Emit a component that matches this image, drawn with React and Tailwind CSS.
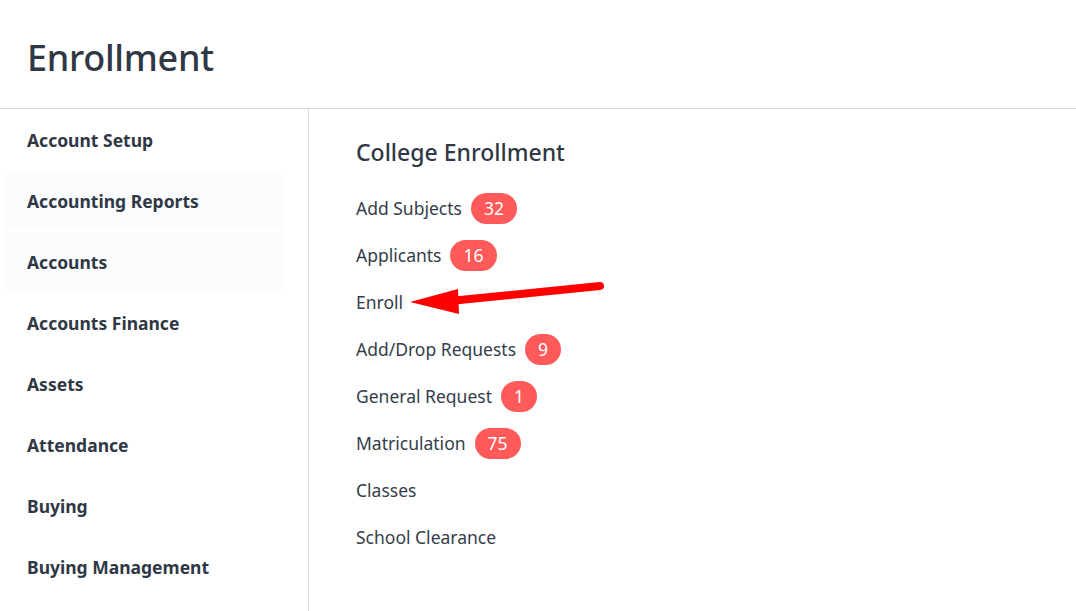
import React from 'react';

const sideItems = [
  { name: 'Account Setup' },
  { name: 'Accounting Reports', tint: true },
  { name: 'Accounts', tint: true },
  { name: 'Accounts Finance' },
  { name: 'Assets' },
  { name: 'Attendance' },
  { name: 'Buying' },
  { name: 'Buying Management' },
];

const links = [
  { name: 'Add Subjects', count: 32 },
  { name: 'Applicants', count: 16 },
  { name: 'Enroll' },
  { name: 'Add/Drop Requests', count: 9 },
  { name: 'General Request', count: 1 },
  { name: 'Matriculation', count: 75 },
  { name: 'Classes' },
  { name: 'School Clearance' },
];

const Arrow = () => (
  <svg className="absolute left-[400px] top-[276px]" width="210" height="44" viewBox="0 0 210 44">
    <line x1="200" y1="10" x2="50" y2="25" stroke="#ff0000" strokeWidth="8" strokeLinecap="round" />
    <polygon points="10,26 58,13 59,38" fill="#ff0000" />
  </svg>
);

export default function App() {
  return (
    <div className="w-[1076px] h-[611px] overflow-hidden bg-white text-[#343d4a] flex flex-col" style={{ fontFamily: '"Noto Sans", "Open Sans", sans-serif' }}>
      {/* Header */}
      <div className="h-[109px] shrink-0 border-b border-[#d5dce3] flex items-center px-[27px] pt-[8px]">
        <h1 className="text-[36px] font-medium text-[#2f3844] tracking-[-0.3px]">Enrollment</h1>
      </div>

      <div className="flex flex-1 min-h-0">
        {/* Sidebar */}
        <div className="w-[309px] shrink-0 border-r border-[#d5dce3] pt-[2px] pl-[3px] pr-[24px]">
          {sideItems.map((item) => (
            <div
              key={item.name}
              className={`h-[58px] mb-[3px] rounded-md flex items-center px-[24px] text-[17.5px] font-bold text-[#2f3844] ${item.tint ? 'bg-[#fafcfe]' : ''}`}
            >
              {item.name}
            </div>
          ))}
        </div>

        {/* Main */}
        <div className="relative flex-1 pl-[47px] pt-[25px]">
          <h2 className="text-[23px] font-medium text-[#2f3844] leading-[36px] mb-[15px]">College Enrollment</h2>
          <div className="flex flex-col">
            {links.map((l) => (
              <div key={l.name} className="h-[47px] flex items-center gap-[9px] text-[17.5px] text-[#343d4a]">
                <span>{l.name}</span>
                {l.count !== undefined && (
                  <span className="h-[31px] min-w-[35px] px-[13px] rounded-full bg-[#ff5a5a] text-white flex items-center justify-center text-[17.5px]">
                    {l.count}
                  </span>
                )}
              </div>
            ))}
          </div>
          <div className="absolute left-[-309px] top-[-109px]">
            <Arrow />
          </div>
        </div>
      </div>
    </div>
  );
}
